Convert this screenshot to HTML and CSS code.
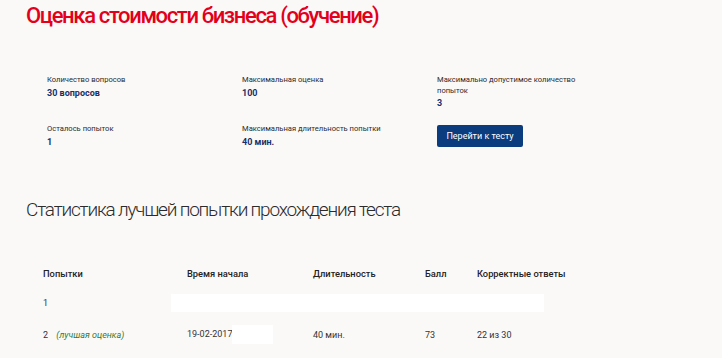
FILE: index.html
```html
<!DOCTYPE html>
<html lang="ru">
<head>
    <meta charset="UTF-8">
    <meta name="viewport" content="width=device-width, initial-scale=1.0">
    <title>Оценка стоимости бизнеса (обучение)</title>

    <link rel="stylesheet" href="styles.css">
</head>

<body>
  <div class="page">
    <h1 class="title">Оценка стоимости бизнеса (обучение)</h1>

    <div class="info">
      <div class="info-item">
        <div class="label">Количество вопросов</div>
        <div class="value">30 вопросов</div>
      </div>
      <div class="info-item">
        <div class="label">Максимальная оценка</div>
        <div class="value">100</div>
      </div>
      <div class="info-item">
        <div class="label">Максимально допустимое количество попыток</div>
        <div class="value">3</div>
      </div>
      <div class="info-item">
        <div class="label">Осталось попыток</div>
        <div class="value">1</div>
      </div>
      <div class="info-item">
        <div class="label">Максимальная длительность попытки</div>
        <div class="value">40 мин.</div>
      </div>
      <div class="info-item">
        <button class="start-btn">Перейти к тесту</button>
      </div>
    </div>

    <h2 class="subtitle">Статистика лучшей попытки прохождения теста</h2>

    <table class="stats">
      <tr>
        <th class="col-try">Попытки</th>
        <th class="col-start">Время начала</th>
        <th class="col-dur">Длительность</th>
        <th class="col-score">Балл</th>
        <th>Корректные ответы</th>
      </tr>
      <tr>
        <td>1</td>
        <td colspan="4"><span class="blank blank-wide"></span></td>
      </tr>
      <tr>
        <td>2 <span class="best">(лучшая оценка)</span></td>
        <td>19-02-2017<span class="blank blank-time"></span></td>
        <td>40 мин.</td>
        <td>73</td>
        <td>22 из 30</td>
      </tr>
    </table>
  </div>
</body>
</html>
```

FILE: styles.css
```css
body {
  margin: 0;
  background-color: #fbf9f8;
  font-family: Roboto, "Noto Sans", sans-serif;
  color: #222;
}

.page {
  padding: 0 26px;
}

.title {
  margin: 0;
  padding-top: 2px;
  font-size: 22px;
  font-weight: 500;
  line-height: 28px;
  color: #e2001a;
  letter-spacing: -1.35px;
}

.info {
  display: grid;
  grid-template-columns: 195px 195px 195px;
  row-gap: 14px;
  padding: 45px 0 0 21px;
}

.info-item {
  width: 150px;
}

.label {
  font-size: 7.6px;
  line-height: 10.5px;
  color: #2a2a2a;
}

.value {
  font-size: 9px;
  line-height: 14px;
  font-weight: 700;
  color: #1b2f66;
}

.start-btn {
  width: 86px;
  height: 22px;
  padding: 0;
  border: none;
  border-radius: 2px;
  background-color: #0b3c7d;
  color: #fff;
  font-family: Roboto, sans-serif;
  font-size: 9px;
}

.subtitle {
  margin: 48px 0 0;
  font-size: 19px;
  font-weight: 300;
  line-height: 26px;
  color: #2b2b2b;
  letter-spacing: -1.2px;
}

.stats {
  margin: 37px 0 0 17px;
  border-collapse: collapse;
  font-size: 9px;
}

.stats th {
  height: 27px;
  padding: 0;
  text-align: left;
  font-weight: 500;
  font-size: 9.3px;
  color: #222;
}

.stats td {
  height: 32px;
  padding: 0;
  color: #333;
}

.col-try { width: 144px; }
.col-start { width: 126px; }
.col-dur { width: 112px; }
.col-score { width: 52px; }

.best {
  margin-left: 6px;
  font-style: italic;
  color: #2e7d32;
}

.blank {
  display: inline-block;
  vertical-align: middle;
  background-color: #fff;
}

.blank-wide {
  width: 373px;
  height: 18px;
  margin-left: -16px;
}

.blank-time {
  width: 41px;
  height: 19px;
}
```
